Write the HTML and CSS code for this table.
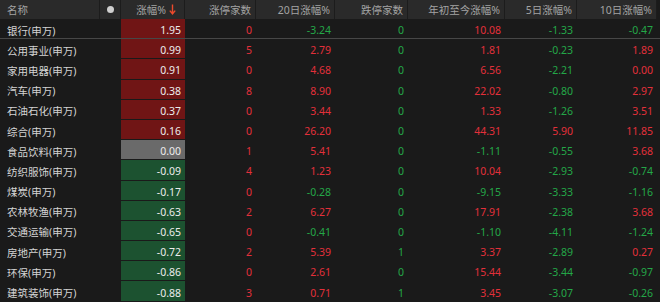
FILE: index.html
```html
<!DOCTYPE html>
<html lang="zh-CN">
<head>
    <meta charset="UTF-8">
    <meta name="viewport" content="width=device-width, initial-scale=1.0">
    <title>申万行业涨幅</title>
    <link rel="stylesheet" href="styles.css">
</head>
<body>
    <div class="quote-table">
        <div class="row head">
            <div class="cell name">名称</div>
            <div class="cell mark"><span class="dot"></span></div>
            <div class="cell sorted">涨幅%<svg class="sort-arrow" width="7" height="11" viewBox="0 0 7 11"><path d="M3.5 0.5v9M0.8 6.6l2.7 3.2 2.7-3.2" fill="none" stroke="#ec4a2c" stroke-width="1.4"/></svg></div>
            <div class="cell">涨停家数</div>
            <div class="cell">20日涨幅%</div>
            <div class="cell">跌停家数</div>
            <div class="cell">年初至今涨幅%</div>
            <div class="cell">5日涨幅%</div>
            <div class="cell">10日涨幅%</div>
        </div>

        <div class="row selected">
            <div class="cell name">银行(申万)</div><div class="cell mark"></div>
            <div class="cell chg up-bg">1.95</div>
            <div class="cell up">0</div><div class="cell down">-3.24</div><div class="cell down">0</div>
            <div class="cell up">10.08</div><div class="cell down">-1.33</div><div class="cell down">-0.47</div>
        </div>
        <div class="row">
            <div class="cell name">公用事业(申万)</div><div class="cell mark"></div>
            <div class="cell chg up-bg">0.99</div>
            <div class="cell up">5</div><div class="cell up">2.79</div><div class="cell down">0</div>
            <div class="cell up">1.81</div><div class="cell down">-0.23</div><div class="cell up">1.89</div>
        </div>
        <div class="row">
            <div class="cell name">家用电器(申万)</div><div class="cell mark"></div>
            <div class="cell chg up-bg">0.91</div>
            <div class="cell up">0</div><div class="cell up">4.68</div><div class="cell down">0</div>
            <div class="cell up">6.56</div><div class="cell down">-2.21</div><div class="cell up">0.00</div>
        </div>
        <div class="row">
            <div class="cell name">汽车(申万)</div><div class="cell mark"></div>
            <div class="cell chg up-bg">0.38</div>
            <div class="cell up">8</div><div class="cell up">8.90</div><div class="cell down">0</div>
            <div class="cell up">22.02</div><div class="cell down">-0.80</div><div class="cell up">2.97</div>
        </div>
        <div class="row">
            <div class="cell name">石油石化(申万)</div><div class="cell mark"></div>
            <div class="cell chg up-bg">0.37</div>
            <div class="cell up">0</div><div class="cell up">3.44</div><div class="cell down">0</div>
            <div class="cell up">1.33</div><div class="cell down">-1.26</div><div class="cell up">3.51</div>
        </div>
        <div class="row">
            <div class="cell name">综合(申万)</div><div class="cell mark"></div>
            <div class="cell chg up-bg">0.16</div>
            <div class="cell up">0</div><div class="cell up">26.20</div><div class="cell down">0</div>
            <div class="cell up">44.31</div><div class="cell up">5.90</div><div class="cell up">11.85</div>
        </div>
        <div class="row">
            <div class="cell name">食品饮料(申万)</div><div class="cell mark"></div>
            <div class="cell chg flat-bg">0.00</div>
            <div class="cell up">1</div><div class="cell up">5.41</div><div class="cell down">0</div>
            <div class="cell down">-1.11</div><div class="cell down">-0.55</div><div class="cell up">3.68</div>
        </div>
        <div class="row">
            <div class="cell name">纺织服饰(申万)</div><div class="cell mark"></div>
            <div class="cell chg down-bg">-0.09</div>
            <div class="cell up">4</div><div class="cell up">1.23</div><div class="cell down">0</div>
            <div class="cell up">10.04</div><div class="cell down">-2.93</div><div class="cell down">-0.74</div>
        </div>
        <div class="row">
            <div class="cell name">煤炭(申万)</div><div class="cell mark"></div>
            <div class="cell chg down-bg">-0.17</div>
            <div class="cell up">0</div><div class="cell down">-0.28</div><div class="cell down">0</div>
            <div class="cell down">-9.15</div><div class="cell down">-3.33</div><div class="cell down">-1.16</div>
        </div>
        <div class="row">
            <div class="cell name">农林牧渔(申万)</div><div class="cell mark"></div>
            <div class="cell chg down-bg">-0.63</div>
            <div class="cell up">2</div><div class="cell up">6.27</div><div class="cell down">0</div>
            <div class="cell up">17.91</div><div class="cell down">-2.38</div><div class="cell up">3.68</div>
        </div>
        <div class="row">
            <div class="cell name">交通运输(申万)</div><div class="cell mark"></div>
            <div class="cell chg down-bg">-0.65</div>
            <div class="cell up">0</div><div class="cell down">-0.41</div><div class="cell down">0</div>
            <div class="cell down">-1.10</div><div class="cell down">-4.11</div><div class="cell down">-1.24</div>
        </div>
        <div class="row">
            <div class="cell name">房地产(申万)</div><div class="cell mark"></div>
            <div class="cell chg down-bg">-0.72</div>
            <div class="cell up">2</div><div class="cell up">5.39</div><div class="cell down">1</div>
            <div class="cell up">3.37</div><div class="cell down">-2.89</div><div class="cell up">0.27</div>
        </div>
        <div class="row">
            <div class="cell name">环保(申万)</div><div class="cell mark"></div>
            <div class="cell chg down-bg">-0.86</div>
            <div class="cell up">0</div><div class="cell up">2.61</div><div class="cell down">0</div>
            <div class="cell up">15.44</div><div class="cell down">-3.44</div><div class="cell down">-0.97</div>
        </div>
        <div class="row">
            <div class="cell name">建筑装饰(申万)</div><div class="cell mark"></div>
            <div class="cell chg down-bg">-0.88</div>
            <div class="cell up">3</div><div class="cell up">0.71</div><div class="cell down">1</div>
            <div class="cell up">3.45</div><div class="cell down">-3.07</div><div class="cell down">-0.26</div>
        </div>
    </div>
</body>
</html>
```

FILE: styles.css
```css
body {
    margin: 0;
    padding: 0;
    background: #1a1a1a;
    font-family: 'Noto Sans', 'Noto Sans CJK SC', sans-serif;
    font-size: 10.5px;
    overflow: hidden;
}
.quote-table {
    width: 660px;
}
.row {
    display: grid;
    grid-template-columns: 100px 21px 64px 71px 79px 73px 97px 72px 80px;
    height: 20.2px;
}
.cell {
    display: flex;
    align-items: center;
    justify-content: flex-end;
    padding: 2px 4px 0 0;
    white-space: nowrap;
}
.head {
    height: 19px;
}
.head .cell {
    background: #2a2a2a;
    border-right: 1px solid #1c1c1c;
    color: #a3a3a3;
    padding-top: 0;
}
.head .sorted {
    padding-right: 8px;
}
.sort-arrow {
    margin-left: 3px;
}
.name {
    justify-content: flex-start;
    padding-left: 7px;
    color: #d4d4d4;
}
.mark {
    justify-content: center;
    padding: 0;
}
.dot {
    width: 7px;
    height: 7px;
    border-radius: 50%;
    background: #cfcfcf;
}
.selected {
    box-shadow: inset 0 -1px 0 #474747;
}
.chg {
    color: #ececec;
    border-bottom: 1px solid #1a1a1a;
    padding-top: 3px;
}
.selected .chg {
    border-bottom-color: #474747;
}
.up-bg {
    background: #701515;
}
.flat-bg {
    background: #6a6a6a;
}
.down-bg {
    background: #1c5230;
}
.up {
    color: #e3303a;
}
.down {
    color: #24a748;
}
```
